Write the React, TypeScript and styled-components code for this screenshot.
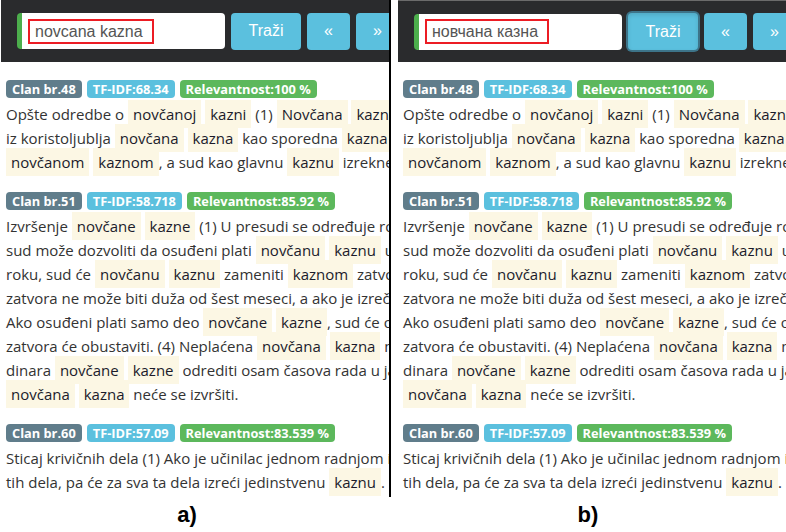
import React from 'react';
import styled, { createGlobalStyle } from 'styled-components';

const GlobalStyle = createGlobalStyle`
  html,body{
    margin:0;
    padding:0;
    background:#fff;
  }
`
const Page = styled.div`
  display:flex;
  align-items:flex-start;
  width:786px;
  height:532px;
  padding-left:1px;
  box-sizing:border-box;
  overflow:hidden;
`
const Column = styled.div<{$gap:number}>`
  flex-shrink:0;
  width:388px;
  margin-right:${p=>p.$gap}px;
  display:flex;
  flex-direction:column;
`
const Panel = styled.div<{$divider?:boolean}>`
  height:497px;
  overflow:hidden;
  border-right:${p=>p.$divider?'2px solid #000':'none'};
  margin-right:${p=>p.$divider?'-2px':'0'};
`
const Header = styled.div<{$topLine?:boolean}>`
  height:62px;
  box-sizing:border-box;
  background:#2a2b2d;
  border-top:${p=>p.$topLine?'1px solid #6b6b6b':'none'};
  display:flex;
  align-items:center;
  padding-left:16px;
  gap:6px;
  white-space:nowrap;
`
const SearchBox = styled.div`
  flex-shrink:0;
  width:208px;
  height:36px;
  box-sizing:border-box;
  background:#fff;
  border-left:5px solid #4cae4c;
  border-radius:4px;
  display:flex;
  align-items:center;
  padding-left:6px;
`
const Query = styled.span`
  border:2px solid #ec1c24;
  padding:2px 9px 2px 5px;
  font-family:"Liberation Sans", Arial, sans-serif;
  font-size:16px;
  line-height:17px;
  color:#555;
`
const Button = styled.button<{$w:number;$focus?:boolean}>`
  flex-shrink:0;
  width:${p=>p.$w}px;
  height:37px;
  background:#5bc0de;
  color:#fff;
  border:none;
  border-radius:4px;
  font-family:"Liberation Sans", Arial, sans-serif;
  font-size:16px;
  padding:0;
  box-shadow:${p=>p.$focus?'0 0 0 2px #3d7489, inset 0 2px 4px rgba(0,0,0,.12)':'none'};
`
const Results = styled.div`
  padding:18px 0 0 5px;
  font-family:"Open Sans", "Noto Sans", sans-serif;
`
const Section = styled.div`
  margin-bottom:18px;
`
const BadgeRow = styled.div`
  display:flex;
  gap:5px;
  margin-bottom:4px;
`
const Badge = styled.span<{$bg:string}>`
  height:18px;
  line-height:18px;
  padding:0 6px;
  border-radius:4px;
  background:${p=>p.$bg};
  color:#fff;
  font-weight:700;
  font-size:12.8px;
  white-space:nowrap;
`
const Line = styled.div`
  white-space:nowrap;
  font-size:15px;
  line-height:24px;
  color:#333;
`
const Mark = styled.span`
  background:#fcf7e4;
  color:#1b1b2b;
  padding:4px 5px;
`
const Caption = styled.div<{$shift:number}>`
  height:35px;
  line-height:35px;
  text-align:center;
  padding-right:${p=>p.$shift}px;
  font-family:"Liberation Sans", Arial, sans-serif;
  font-weight:700;
  font-size:22px;
  color:#000;
`

interface Article {
  clan:string,
  tfidf:string,
  rel:string,
  lines:string[]
}

const articles:Article[] = [
  {
    clan:'Clan br.48', tfidf:'TF-IDF:68.34', rel:'Relevantnost:100 %',
    lines:[
      'Opšte odredbe o [novčanoj] [kazni] (1) [Novčana] [kazna] se može izreći',
      'iz koristoljublja [novčana] [kazna] kao sporedna [kazna] može se',
      '[novčanom] [kaznom], a sud kao glavnu [kaznu] izrekne zatvor.',
    ]
  },
  {
    clan:'Clan br.51', tfidf:'TF-IDF:58.718', rel:'Relevantnost:85.92 %',
    lines:[
      'Izvršenje [novčane] [kazne] (1) U presudi se određuje rok plaćanja',
      'sud može dozvoliti da osuđeni plati [novčanu] [kaznu] u ratama',
      'roku, sud će [novčanu] [kaznu] zameniti [kaznom] zatvora',
      'zatvora ne može biti duža od šest meseci, a ako je izrečena',
      'Ako osuđeni plati samo deo [novčane] [kazne], sud će ostatak',
      'zatvora će obustaviti. (4) Neplaćena [novčana] [kazna] može se',
      'dinara [novčane] [kazne] odrediti osam časova rada u javnom',
      '[novčana] [kazna] neće se izvršiti.',
    ]
  },
  {
    clan:'Clan br.60', tfidf:'TF-IDF:57.09', rel:'Relevantnost:83.539 %',
    lines:[
      'Sticaj krivičnih dela (1) Ako je učinilac jednom radnjom ili',
      'tih dela, pa će za sva ta dela izreći jedinstvenu [kaznu].',
    ]
  },
]

const renderLine = (line:string)=>
  line.split(/(\[[^\]]+\])/).filter(Boolean).map((part,i)=>
    part.startsWith('[')
      ? <Mark key={i}>{part.slice(1,-1)}</Mark>
      : <React.Fragment key={i}>{part}</React.Fragment>
  )

const Screen = ({query,focused,divider}:{query:string,focused?:boolean,divider?:boolean})=>(
  <Panel $divider={divider}>
    <Header $topLine={focused}>
      <SearchBox><Query>{query}</Query></SearchBox>
      <Button $w={70} $focus={focused}>Traži</Button>
      <Button $w={43}>«</Button>
      <Button $w={43}>»</Button>
    </Header>
    <Results>
      {articles.map(a=>(
        <Section key={a.clan}>
          <BadgeRow>
            <Badge $bg="#607d8b">{a.clan}</Badge>
            <Badge $bg="#5bc0de">{a.tfidf}</Badge>
            <Badge $bg="#5cb85c">{a.rel}</Badge>
          </BadgeRow>
          {a.lines.map((l,i)=><Line key={i}>{renderLine(l)}</Line>)}
        </Section>
      ))}
    </Results>
  </Panel>
)

export default function App(){
  return (
    <Page>
      <GlobalStyle/>
      <Column $gap={9}>
        <Screen query="novcana kazna" divider/>
        <Caption $shift={16}>a)</Caption>
      </Column>
      <Column $gap={0}>
        <Screen query="новчана казна" focused/>
        <Caption $shift={8}>b)</Caption>
      </Column>
    </Page>
  )
}
